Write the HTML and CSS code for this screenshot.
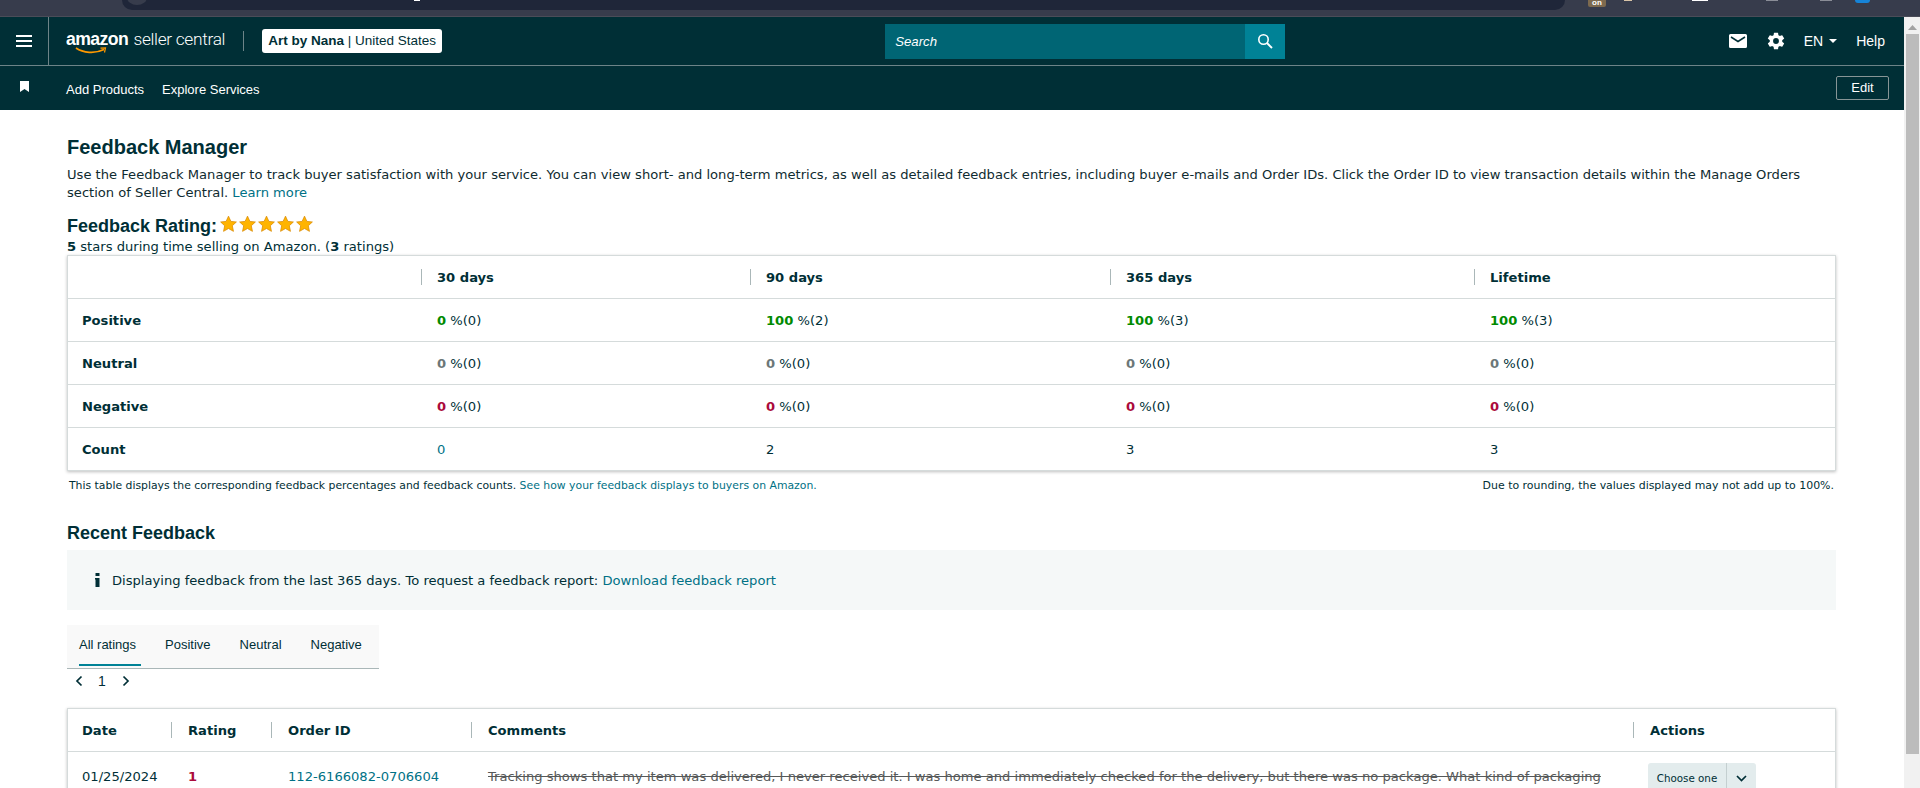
FILE: index.html
```html
<!DOCTYPE html>
<html lang="en">
<head>
<meta charset="utf-8">
<title>Feedback Manager</title>
<link rel="stylesheet" href="styles.css">
</head>
<body>
<div class="chrome">
  <div class="chrome-pill"><span class="chrome-circle"></span><span class="chrome-dot"></span></div>
  <div class="chrome-ext">
    <span class="ext-badge">on</span><span class="ext-a"></span><span class="ext-b"></span><span class="ext-c"></span><span class="ext-c ext-c2"></span><span class="ext-avatar"></span>
  </div>
</div>
<div class="window">
  <div class="page">
    <header class="nav">
      <div class="nav-top">
        <div class="burger"><svg width="16" height="12" viewBox="0 0 16 12"><path d="M0 1h16M0 6h16M0 11h16" stroke="#fff" stroke-width="2" fill="none"/></svg></div>
        <div class="brand">
          <span class="brand-name"><span class="brand-amazon">amazon</span><svg class="brand-smile" width="32" height="8" viewBox="0 0 32 8"><path d="M1 1C8 6 20 7 29 2.500" stroke="#f90" stroke-width="1.800" fill="none"/><path d="M25.500 1.200 L30.500 1 L29.500 5.500" stroke="#f90" stroke-width="1.200" fill="none"/></svg></span>
          <span class="brand-seller">seller central</span>
        </div>
        <span class="brand-sep"></span>
        <div class="account"><b>Art by Nana</b> | United States</div>
        <div class="search">
          <div class="search-input">Search</div>
          <div class="search-btn"><svg width="16" height="16" viewBox="0 0 16 16"><circle cx="6.500" cy="6.500" r="4.700" stroke="#fff" stroke-width="1.600" fill="none"/><path d="M10 10l5 5" stroke="#fff" stroke-width="1.900" fill="none"/></svg></div>
        </div>
        <div class="nav-right">
          <svg class="nav-mail" width="18" height="14" viewBox="0 0 18 14"><path d="M1.500 0h15A1.500 1.500 0 0 1 18 1.500v11a1.500 1.500 0 0 1-1.500 1.500h-15A1.500 1.500 0 0 1 0 12.500v-11A1.500 1.500 0 0 1 1.500 0z" fill="#fff"/><path d="M2 3l7 4.500L16 3" stroke="#002f36" stroke-width="1.500" fill="none"/></svg>
          <svg class="nav-gear" width="20" height="20" viewBox="0 0 24 24"><path fill="#fff" d="M19.430 12.980c.04-.32.07-.64.07-.98s-.03-.66-.07-.98l2.110-1.650a.5.500 0 0 0 .12-.64l-2-3.460a.5.500 0 0 0-.61-.22l-2.490 1a7.300 7.300 0 0 0-1.690-.98l-.38-2.650A.49.490 0 0 0 14 2h-4a.49.490 0 0 0-.49.420l-.38 2.650c-.61.250-1.170.590-1.690.98l-2.490-1a.49.490 0 0 0-.61.220l-2 3.460a.49.490 0 0 0 .12.640l2.110 1.650c-.04.320-.07.650-.07.980s.03.660.07.980l-2.110 1.650a.5.500 0 0 0-.12.640l2 3.460c.12.220.39.300.61.220l2.490-1c.52.400 1.080.730 1.690.98l.38 2.650c.03.240.24.420.49.420h4c.25 0 .46-.18.49-.42l.38-2.650c.61-.25 1.170-.59 1.690-.98l2.490 1c.23.090.49 0 .61-.22l2-3.460a.5.500 0 0 0-.12-.64zM12 15.500a3.500 3.500 0 1 1 0-7 3.500 3.500 0 0 1 0 7z"/></svg>
          <span class="nav-lang">EN<span class="caret"></span></span>
          <span class="nav-help">Help</span>
        </div>
      </div>
      <div class="nav-bottom">
        <svg class="bookmark" width="9" height="11" viewBox="0 0 9 11"><path d="M0 0h9v11L4.500 8 0 11z" fill="#fff"/></svg>
        <a class="nav-link nav-link-first">Add Products</a>
        <a class="nav-link">Explore Services</a>
        <span class="edit-btn">Edit</span>
      </div>
    </header>

    <main class="content">
      <h1 class="title">Feedback Manager</h1>
      <p class="intro">Use the Feedback Manager to track buyer satisfaction with your service. You can view short- and long-term metrics, as well as detailed feedback entries, including buyer e-mails and Order IDs. Click the Order ID to view transaction details within the Manage Orders section of Seller Central. <a class="link">Learn more</a></p>

      <div class="rating-head">
        <h2 class="rating-title">Feedback Rating:</h2>
        <div class="stars">
          <svg width="19" height="18" viewBox="0 0 24 24"><path d="M12 1.500l3.200 7 7.300.8-5.400 5 1.500 7.500L12 18l-6.600 3.800 1.500-7.500-5.400-5 7.300-.8z" fill="#ffb400" stroke="#d98a00" stroke-width="1"/></svg>
          <svg width="19" height="18" viewBox="0 0 24 24"><path d="M12 1.500l3.200 7 7.300.8-5.400 5 1.500 7.500L12 18l-6.600 3.800 1.500-7.500-5.400-5 7.300-.8z" fill="#ffb400" stroke="#d98a00" stroke-width="1"/></svg>
          <svg width="19" height="18" viewBox="0 0 24 24"><path d="M12 1.500l3.200 7 7.300.8-5.400 5 1.500 7.500L12 18l-6.600 3.800 1.500-7.500-5.400-5 7.300-.8z" fill="#ffb400" stroke="#d98a00" stroke-width="1"/></svg>
          <svg width="19" height="18" viewBox="0 0 24 24"><path d="M12 1.500l3.200 7 7.300.8-5.400 5 1.500 7.500L12 18l-6.600 3.800 1.500-7.500-5.400-5 7.300-.8z" fill="#ffb400" stroke="#d98a00" stroke-width="1"/></svg>
          <svg width="19" height="18" viewBox="0 0 24 24"><path d="M12 1.500l3.200 7 7.300.8-5.400 5 1.500 7.500L12 18l-6.600 3.800 1.500-7.500-5.400-5 7.300-.8z" fill="#ffb400" stroke="#d98a00" stroke-width="1"/></svg>
        </div>
      </div>
      <p class="rating-sub"><b>5</b> stars during time selling on Amazon. (<b>3</b> ratings)</p>

      <div class="card stats">
        <div class="row row-head">
          <div class="cell"></div>
          <div class="cell th sep">30 days</div>
          <div class="cell th sep">90 days</div>
          <div class="cell th sep">365 days</div>
          <div class="cell th sep">Lifetime</div>
        </div>
        <div class="row">
          <div class="cell label">Positive</div>
          <div class="cell"><b class="good">0</b> %(0)</div>
          <div class="cell"><b class="good">100</b> %(2)</div>
          <div class="cell"><b class="good">100</b> %(3)</div>
          <div class="cell"><b class="good">100</b> %(3)</div>
        </div>
        <div class="row">
          <div class="cell label">Neutral</div>
          <div class="cell"><b class="mid">0</b> %(0)</div>
          <div class="cell"><b class="mid">0</b> %(0)</div>
          <div class="cell"><b class="mid">0</b> %(0)</div>
          <div class="cell"><b class="mid">0</b> %(0)</div>
        </div>
        <div class="row">
          <div class="cell label">Negative</div>
          <div class="cell"><b class="bad">0</b> %(0)</div>
          <div class="cell"><b class="bad">0</b> %(0)</div>
          <div class="cell"><b class="bad">0</b> %(0)</div>
          <div class="cell"><b class="bad">0</b> %(0)</div>
        </div>
        <div class="row">
          <div class="cell label">Count</div>
          <div class="cell"><a class="link">0</a></div>
          <div class="cell">2</div>
          <div class="cell">3</div>
          <div class="cell">3</div>
        </div>
      </div>
      <div class="notes">
        <span>This table displays the corresponding feedback percentages and feedback counts. <a class="link">See how your feedback displays to buyers on Amazon.</a></span>
        <span class="notes-right">Due to rounding, the values displayed may not add up to 100%.</span>
      </div>

      <h2 class="recent-title">Recent Feedback</h2>
      <div class="info">
        <svg class="info-icon" width="5" height="14" viewBox="0 0 5 14"><path d="M.5 0h4v3h-4zM0 5h4.500v9H.5V6.500H0z" fill="#002f36"/></svg>
        <span>Displaying feedback from the last 365 days. To request a feedback report: <a class="link">Download feedback report</a></span>
      </div>

      <div class="tabs">
        <span class="tab tab-active">All ratings</span>
        <span class="tab">Positive</span>
        <span class="tab">Neutral</span>
        <span class="tab">Negative</span>
      </div>
      <div class="pager">
        <svg width="8" height="12" viewBox="0 0 8 12"><path d="M6.500 1.500L2 6l4.500 4.500" stroke="#002f36" stroke-width="1.700" fill="none"/></svg>
        <span class="pager-num">1</span>
        <svg width="8" height="12" viewBox="0 0 8 12"><path d="M1.500 1.500L6 6l-4.500 4.500" stroke="#002f36" stroke-width="1.700" fill="none"/></svg>
      </div>

      <div class="card feed">
        <div class="row row-head">
          <div class="cell th">Date</div>
          <div class="cell th sep">Rating</div>
          <div class="cell th sep">Order ID</div>
          <div class="cell th sep">Comments</div>
          <div class="cell th sep">Actions</div>
        </div>
        <div class="row row-body">
          <div class="cell cell-text">01/25/2024</div>
          <div class="cell cell-text"><b class="bad">1</b></div>
          <div class="cell cell-text"><a class="link">112-6166082-0706604</a></div>
          <div class="cell cell-text comment"><s>Tracking shows that my item was delivered, I never received it. I was home and immediately checked for the delivery, but there was no package. What kind of packaging</s></div>
          <div class="cell">
            <div class="choose"><span class="choose-label">Choose one</span><span class="choose-arrow"><svg width="11" height="7" viewBox="0 0 11 7"><path d="M1 1l4.500 4.500L10 1" stroke="#002f36" stroke-width="1.700" fill="none"/></svg></span></div>
          </div>
        </div>
      </div>
    </main>
  </div>
  <div class="scrollbar">
    <svg class="scroll-arrow" width="9" height="5" viewBox="0 0 9 5"><path d="M0 5L4.500 0 9 5z" fill="#a3a3a3"/></svg>
    <div class="scroll-thumb"></div>
  </div>
</div>
</body>
</html>
```
FILE: styles.css
```css
* { box-sizing: border-box; }
html, body { margin: 0; padding: 0; }
body {
  width: 1920px;
  height: 788px;
  overflow: hidden;
  font-family: "DejaVu Sans", Verdana, sans-serif;
  font-size: 13.100px;
  color: #002f36;
  background: #fff;
}
b { font-weight: 700; }
a { text-decoration: none; }
p, h1, h2 { margin: 0; }

.chrome {
  height: 17px;
  background: #373c4c;
  border-bottom: 1px solid #4a4c58;
  display: flex;
  overflow: hidden;
  position: relative;
}
.chrome-pill {
  margin-left: 122px;
  width: 1443px;
  height: 10px;
  background: #1f2639;
  border-radius: 0 0 14px 14px;
  position: relative;
}
.chrome-circle {
  position: absolute;
  left: 5px;
  top: -10px;
  width: 20px;
  height: 15px;
  border-radius: 50%;
  background: #373c4c;
}
.chrome-dot {
  position: absolute;
  left: 292px;
  top: 0;
  width: 6px;
  height: 1px;
  background: #fff;
}
.chrome-ext {
  margin-left: 23px;
  display: flex;
  align-items: flex-start;
}
.ext-badge {
  width: 18px;
  height: 7px;
  background: #7d6a4f;
  color: #fff;
  font: 700 8px/6px "Liberation Sans", sans-serif;
  text-align: center;
  border-radius: 0 0 2px 2px;
  overflow: hidden;
}
.ext-a { width: 8px; height: 1px; background: #d9c4a8; margin-left: 18px; }
.ext-b { width: 16px; height: 1px; background: #fff; margin-left: 60px; }
.ext-c { width: 12px; height: 1px; background: #8a8d97; margin-left: 58px; }
.ext-c2 { margin-left: 42px; }
.ext-avatar { width: 15px; height: 3px; border-radius: 0 0 8px 8px; background: #1684d8; margin-left: 23px; }

.window { display: flex; height: 771px; }
.page { flex: 1; min-width: 0; height: 771px; overflow: hidden; }

.scrollbar {
  width: 16px;
  background: #f1f1f1;
  display: flex;
  flex-direction: column;
  align-items: center;
}
.scroll-arrow { margin-top: 8px; }
.scroll-thumb { width: 13px; height: 720px; margin-top: 4px; background: #bcbcbc; }

.nav { background: #002f36; color: #fff; font-family: "Liberation Sans", Arial, sans-serif; }
.nav-top {
  height: 49px;
  border-bottom: 1px solid #6d8488;
  display: flex;
  align-items: center;
}
.burger {
  width: 49px;
  height: 48px;
  border-right: 1px solid #6d8488;
  display: flex;
  align-items: center;
  padding-left: 16px;
}
.brand { margin-left: 17px; display: flex; align-items: baseline; height: 30px; margin-top: -2px; }
.brand-name { position: relative; display: block; }
.brand-amazon {
  font-weight: 700;
  font-size: 18px;
  line-height: 28px;
  letter-spacing: -0.6px;
  display: inline-block;
  transform: scaleX(0.98);
  transform-origin: left;
}
.brand-smile { position: absolute; left: 9px; top: 22px; }
.brand-seller {
  font-family: Roboto, sans-serif;
  font-weight: 300;
  font-size: 17.300px;
  line-height: 28px;
  margin-left: 4px;
  letter-spacing: -0.3px;
}
.brand-sep { width: 1px; height: 20px; background: #6d8488; margin-left: 18px; }
.account {
  width: 180px;
  margin-left: 18px;
  height: 24px;
  background: #fff;
  color: #002f36;
  border-radius: 3px;
  font-size: 13.500px;
  line-height: 24px;
  text-align: center;
  white-space: nowrap;
}
.search { margin-left: 443px; display: flex; height: 35px; }
.search-input {
  width: 360px;
  background: #006574;
  font-style: italic;
  font-size: 13.200px;
  line-height: 35px;
  padding-left: 10px;
}
.search-btn {
  width: 40px;
  background: #008296;
  display: flex;
  align-items: center;
  justify-content: center;
}
.nav-right { margin-left: auto; display: flex; align-items: center; padding-right: 19px; font-size: 14px; }
.nav-gear { margin-left: 19px; }
.nav-lang { margin-left: 18px; display: flex; align-items: center; }
.caret {
  margin-left: 6px;
  width: 0;
  height: 0;
  border-left: 4px solid transparent;
  border-right: 4px solid transparent;
  border-top: 4px solid #fff;
}
.nav-help { margin-left: 19px; }

.nav-bottom {
  height: 44px;
  display: flex;
  align-items: center;
  padding: 0 15px 0 20px;
}
.bookmark { margin-top: -3px; }
.nav-link { font-size: 13px; color: #fff; margin-left: 18px; padding-top: 2px; }
.nav-link-first { margin-left: 37px; }
.edit-btn {
  margin-left: auto;
  width: 53px;
  height: 24px;
  border: 1px solid #879596;
  border-radius: 2px;
  font-size: 13px;
  line-height: 22px;
  text-align: center;
}

.content { padding: 24px 68px 0 67px; }
.title { font: 700 20px/26px "Liberation Sans", Arial, sans-serif; }
.intro { margin-top: 6px; line-height: 18px; color: #0f2b30; }
.link { color: #007185; }

.rating-head { display: flex; align-items: flex-start; margin-top: 13px; height: 22px; }
.rating-title { font: 700 18px/22px "Liberation Sans", Arial, sans-serif; }
.stars { display: flex; margin-left: 2px; }
.rating-sub { line-height: 16px; margin-top: 2px; }

.card {
  border: 1px solid #d5dbdb;
  box-shadow: 0 1px 3px rgba(0, 0, 0, .25);
  background: #fff;
}
.row { display: grid; align-items: center; border-top: 1px solid #d5dbdb; height: 43px; }
.row:first-child { border-top: 0; }
.row-head { height: 42px; }
.stats { margin-top: 0; }
.stats .row { grid-template-columns: 353px 329px 360px 364px 1fr; }
.feed { margin-top: 15px; }
.feed .row { grid-template-columns: 103px 100px 200px 1162px 1fr; }
.cell { padding-left: 16px; white-space: nowrap; overflow: hidden; }
.cell:first-child { padding-left: 14px; }
.th { font-weight: 700; position: relative; padding-left: 15px; }
.sep { border-left: 1px solid #aab7b8; height: 16px; line-height: 18px; overflow: visible; }
.feed .sep { padding-left: 16px; }
.feed .row-body .cell { padding-left: 17px; }
.feed .row-body .cell:first-child { padding-left: 14px; }
.label { font-weight: 700; }
.good { color: #008a00; }
.mid { color: #6c7778; }
.bad { color: #ab0b3c; }

.notes {
  display: flex;
  justify-content: space-between;
  font-size: 10.850px;
  line-height: 14px;
  margin-top: 8px;
  padding: 0 2px;
}
.notes-right { font-size: 10.950px; }
.recent-title { font: 700 18px/22px "Liberation Sans", Arial, sans-serif; margin-top: 29px; }
.info {
  margin-top: 6px;
  height: 60px;
  background: #f5f8f8;
  display: flex;
  align-items: center;
  padding-left: 28px;
}
.info-icon { margin-right: 12px; }

.tabs {
  margin-top: 15px;
  width: 312px;
  height: 44px;
  background: #f9f9f9;
  border-bottom: 1px solid #aab7b8;
  display: flex;
  font: 13px/40px "Liberation Sans", Arial, sans-serif;
  padding-left: 12px;
  white-space: nowrap;
}
.tab { margin-right: 29px; position: relative; }
.tab-active::after {
  content: "";
  position: absolute;
  left: 0;
  right: -5px;
  bottom: 2px;
  height: 2px;
  background: #008296;
}
.pager {
  display: flex;
  align-items: center;
  height: 24px;
  padding-left: 8px;
  font: 14px/24px "Liberation Sans", Arial, sans-serif;
}
.pager-num { margin: 0 16px 0 15px; }

.row-body { height: 60px; align-items: start; padding-top: 11px; }
.cell-text { padding-top: 6px; }
.comment { color: #565959; }
.choose {
  display: flex;
  width: 108px;
  height: 30px;
  background: #e3eced;
  border-radius: 3px;
  font: 10.300px/30px "DejaVu Sans", sans-serif;
}
.feed .row-body .cell:last-child { padding-left: 15px; }
.choose-label { width: 79px; text-align: center; border-right: 1px solid #c4cfd0; }
.choose-arrow { flex: 1; display: flex; align-items: center; justify-content: center; height: 30px; }
```
